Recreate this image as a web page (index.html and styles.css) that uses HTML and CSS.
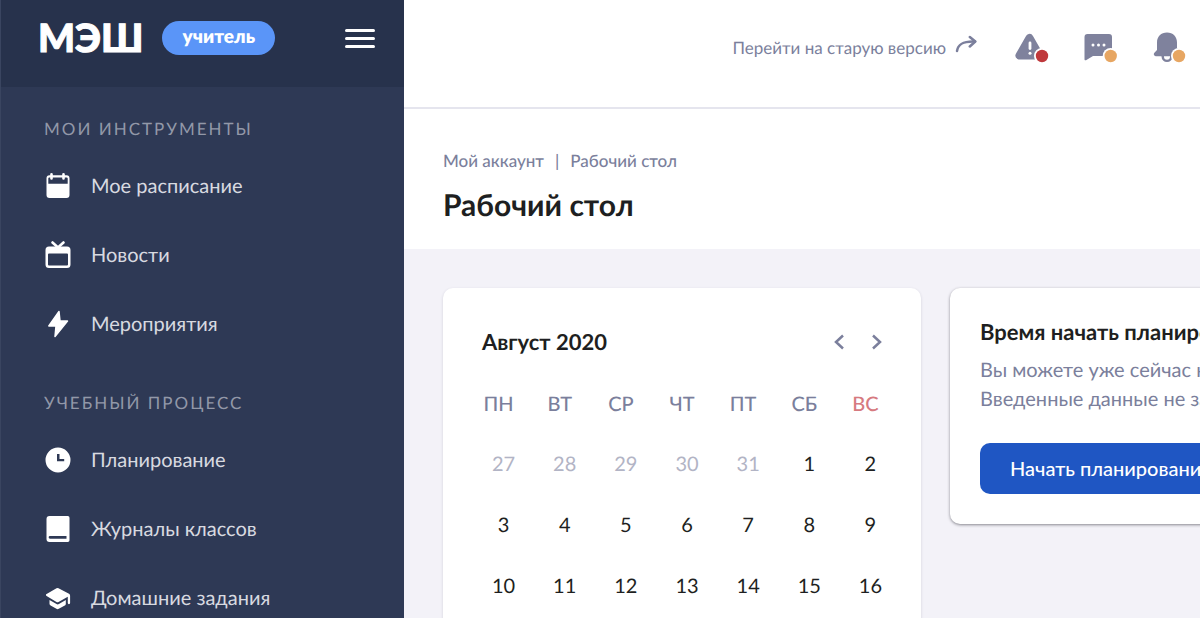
FILE: index.html
```html
<!DOCTYPE html>
<html lang="ru">
  <head>
    <meta charset="utf-8" />
    <meta name="viewport" content="width=device-width, initial-scale=1.0" />
    <title>Рабочий стол</title>
    <link rel="stylesheet" href="styles.css">
  </head>
  <body>
    <aside class="sidebar">
      <div class="sidebar-header">
        <a href="#" class="logo">МЭШ</a>
        <span class="role">учитель</span>
        <button type="button" class="menu-btn" aria-label="Меню">
          <span></span>
          <span></span>
          <span></span>
        </button>
      </div>
      <nav class="nav">
        <section class="nav-group">
          <h2>Мои инструменты</h2>
          <ul>
            <li>
              <a href="#">
                <svg viewBox="0 0 28 28" fill="currentColor">
                  <path fill-rule="evenodd" d="M7.500 1a1.300 1.300 0 0 1 1.300 1.300V3.200h9.400V2.300a1.300 1.300 0 0 1 2.600 0V3.200h1.700a3 3 0 0 1 3 3v16.800a3 3 0 0 1-3 3H5.500a3 3 0 0 1-3-3V6.200a3 3 0 0 1 3-3h.7V2.300A1.300 1.300 0 0 1 7.500 1zM4.300 6.500v5.200h19.400V6.500a1 1 0 0 0-1-1h-1.900v1a1.300 1.300 0 0 1-2.600 0v-1H8.800v1a1.300 1.300 0 0 1-2.600 0v-1h-.9a1 1 0 0 0-1 1z"/>
                </svg>
                Мое расписание
              </a>
            </li>
            <li>
              <a href="#">
                <svg viewBox="0 0 28 28">
                  <path d="M8.500 1.500l5.500 5 5.500-5" fill="none" stroke="currentColor" stroke-width="2.600" stroke-linecap="round"/>
                  <path fill="currentColor" fill-rule="evenodd" d="M5 5.500h18a3.500 3.500 0 0 1 3.500 3.500v14.500A3.500 3.500 0 0 1 23 27H5a3.500 3.500 0 0 1-3.500-3.500V9A3.500 3.500 0 0 1 5 5.500zM5 12.500a1 1 0 0 0-1 1v10a1 1 0 0 0 1 1h18a1 1 0 0 0 1-1v-10a1 1 0 0 0-1-1z"/>
                </svg>
                Новости
              </a>
            </li>
            <li>
              <a href="#">
                <svg viewBox="0 0 28 28">
                  <path d="M15 1.500L4.800 16H12l-1 10.500L23.500 11H16z" fill="currentColor" stroke="currentColor" stroke-width="1.500" stroke-linejoin="round"/>
                </svg>
                Мероприятия
              </a>
            </li>
          </ul>
        </section>
        <section class="nav-group">
          <h2>Учебный процесс</h2>
          <ul>
            <li>
              <a href="#">
                <svg viewBox="0 0 28 28" fill="currentColor">
                  <path fill-rule="evenodd" d="M14 1.500a12.500 12.500 0 1 1 0 25 12.500 12.500 0 0 1 0-25zM13 8v7.300h7.200v-2.300h-4.700V8z"/>
                </svg>
                Планирование
              </a>
            </li>
            <li>
              <a href="#">
                <svg viewBox="0 0 28 28" fill="currentColor">
                  <path fill-rule="evenodd" d="M5.500 1h18.300a1.700 1.700 0 0 1 1.700 1.700v22.600a1.700 1.700 0 0 1-1.700 1.700H5.500a3 3 0 0 1-3-3V4a3 3 0 0 1 3-3zM6 21a1.300 1.300 0 0 0 0 2.700h16.500V21z"/>
                </svg>
                Журналы классов
              </a>
            </li>
            <li>
              <a href="#">
                <svg viewBox="0 0 28 28" fill="currentColor">
                  <path d="M12.500 4.200a2 2 0 0 1 2 0l10.500 5.500q1.100.7 1.100 2V19a1.100 1.100 0 0 1-2.300 0v-6.200L14.500 18a2 2 0 0 1-2 0L2.600 12a1 1 0 0 1 0-1.900z"/>
                  <path d="M5.500 16l7 4.100q1.200.7 2.400 0l6.900-4.100v4a2 2 0 0 1-1 1.600l-6 3.200a2.500 2.500 0 0 1-2.400 0l-5.800-3.200a2 2 0 0 1-1.100-1.800z"/>
                </svg>
                Домашние задания
              </a>
            </li>
          </ul>
        </section>
      </nav>
    </aside>
    <div class="page">
      <header class="topbar">
        <a href="#" class="old-version">
          Перейти на старую версию
          <svg viewBox="0 0 22 20" fill="none" stroke="currentColor" stroke-width="2.500" stroke-linecap="round" stroke-linejoin="round">
            <path d="M2 17C3 10 8 7 20 7.500"/>
            <path d="M14.800 3l5.500 4.500-5.500 5"/>
          </svg>
        </a>
        <div class="notices">
          <button type="button" class="notice" aria-label="Предупреждения">
            <svg viewBox="0 0 34 32">
              <path d="M14.500 6L4.500 23.500h20z" fill="#7f829d" stroke="#7f829d" stroke-width="8" stroke-linejoin="round"/>
              <path d="M15 11v5.500" stroke="#fff" stroke-width="2.800" stroke-linecap="round"/>
              <circle cx="15" cy="21.300" r="1.500" fill="#fff"/>
              <circle cx="27" cy="24" r="8" fill="#fff"/>
              <circle cx="27" cy="24" r="6.200" fill="#bf383b"/>
            </svg>
          </button>
          <button type="button" class="notice" aria-label="Сообщения">
            <svg viewBox="0 0 34 32">
              <path d="M3.500 2h21.500a3 3 0 0 1 3 3v16a3 3 0 0 1-3 3H9l-7 4.200a1 1 0 0 1-1.500-1V5a3 3 0 0 1 3-3z" fill="#7f829d"/>
              <circle cx="9" cy="13" r="1.500" fill="#fff"/>
              <circle cx="14.500" cy="13" r="1.500" fill="#fff"/>
              <circle cx="20" cy="13" r="1.500" fill="#fff"/>
              <circle cx="26.700" cy="24" r="8" fill="#fff"/>
              <circle cx="26.700" cy="24" r="6.200" fill="#e7a662"/>
            </svg>
          </button>
          <button type="button" class="notice" aria-label="Уведомления">
            <svg viewBox="0 0 34 32">
              <path d="M14 .5c-6 0-10 4-10 10v7.500l-2.800 3a2 2 0 0 0 1.500 3.200h22.800V18L24 16v-5.500c0-6-4-10-10-10z" fill="#7f829d"/>
              <path d="M8.500 23.500h11v1a5.500 5.500 0 0 1-11 0z" fill="#7f829d"/>
              <path d="M11 24.200h6v.6a3 3 0 0 1-6 0z" fill="#fff"/>
              <circle cx="26" cy="24" r="8" fill="#fff"/>
              <circle cx="26" cy="24" r="6.200" fill="#e7a662"/>
            </svg>
          </button>
        </div>
      </header>
      <div class="page-title">
        <div class="breadcrumbs">
          <a href="#">Мой аккаунт</a>
          <span>|</span>
          <a href="#">Рабочий стол</a>
        </div>
        <h1>Рабочий стол</h1>
      </div>
      <main class="content">
        <section class="card calendar">
          <div class="calendar-header">
            <h2>Август 2020</h2>
            <div class="calendar-nav">
              <button type="button" aria-label="Предыдущий месяц">
                <svg viewBox="0 0 12 16"><path d="M10 1.500L3 8l7 6.500"/></svg>
              </button>
              <button type="button" aria-label="Следующий месяц">
                <svg viewBox="0 0 12 16"><path d="M2 1.500L9 8l-7 6.500"/></svg>
              </button>
            </div>
          </div>
          <table>
            <thead>
              <tr>
                <th>ПН</th>
                <th>ВТ</th>
                <th>СР</th>
                <th>ЧТ</th>
                <th>ПТ</th>
                <th>СБ</th>
                <th class="sunday">ВС</th>
              </tr>
            </thead>
            <tbody>
              <tr>
                <td class="other">27</td>
                <td class="other">28</td>
                <td class="other">29</td>
                <td class="other">30</td>
                <td class="other">31</td>
                <td>1</td>
                <td>2</td>
              </tr>
              <tr>
                <td>3</td>
                <td>4</td>
                <td>5</td>
                <td>6</td>
                <td>7</td>
                <td>8</td>
                <td>9</td>
              </tr>
              <tr>
                <td>10</td>
                <td>11</td>
                <td>12</td>
                <td>13</td>
                <td>14</td>
                <td>15</td>
                <td>16</td>
              </tr>
            </tbody>
          </table>
        </section>
        <section class="card planning">
          <h2>Время начать планирование</h2>
          <p>Вы можете уже сейчас начать<br>Введенные данные не затеряются</p>
          <button type="button" class="primary-btn">Начать планирование</button>
        </section>
      </main>
    </div>
  </body>
</html>
```
FILE: styles.css
```css
:root {
  --sidebar: #2e3955;
  --sidebar-dark: #27324c;
  --muted: #7b7f9c;
  --text: #1e1f21;
  --accent: #1f56c3;
}

* {
  box-sizing: border-box;
}

body {
  margin: 0;
  height: 100vh;
  display: flex;
  overflow: hidden;
  font-family: Lato, "Liberation Sans", sans-serif;
  font-size: 20px;
  line-height: 24px;
  text-rendering: geometricPrecision;
  color: var(--text);
  background: #f3f2f8;
}

h1,
h2,
p,
ul {
  margin: 0;
  padding: 0;
}

ul {
  list-style: none;
}

a {
  color: inherit;
  text-decoration: none;
}

button {
  border: none;
  background: none;
  padding: 0;
  font: inherit;
  color: inherit;
  cursor: pointer;
}

svg {
  display: block;
}

/* sidebar */
.sidebar {
  flex: 0 0 404px;
  background: var(--sidebar);
  border-left: 1px solid #3a4560;
  overflow: hidden;
}

.sidebar-header {
  display: flex;
  align-items: center;
  height: 87px;
  padding: 0 29px 11px 37px;
  background: var(--sidebar-dark);
}

.logo {
  font-size: 39px;
  line-height: 40px;
  font-weight: 900;
  color: #fff;
  -webkit-text-stroke: 1px #fff;
}

.role {
  margin-left: 19px;
  padding: 0 20px 2px;
  border-radius: 17px;
  background: #5a95f8;
  color: #fff;
  font-size: 19px;
  font-weight: 800;
  line-height: 32px;
}

.menu-btn {
  display: flex;
  flex-direction: column;
  gap: 5px;
  width: 30px;
  margin-left: auto;
}

.menu-btn span {
  height: 3px;
  border-radius: 2px;
  background: #fff;
}

.nav {
  display: flex;
  flex-direction: column;
  gap: 34px;
  padding: 31px 43px;
}

.nav-group h2 {
  margin-bottom: 11px;
  font-size: 17px;
  line-height: 22px;
  font-weight: 400;
  letter-spacing: 2px;
  text-transform: uppercase;
  color: #9298a8;
}

.nav-group a {
  display: flex;
  align-items: center;
  gap: 19px;
  height: 69px;
  color: #d8dae0;
  white-space: nowrap;
}

.nav-group svg {
  width: 28px;
  height: 28px;
  color: #fff;
}

/* top bar */
.page {
  flex: 1;
  min-width: 0;
  overflow: hidden;
}

.topbar {
  display: flex;
  align-items: center;
  justify-content: flex-end;
  gap: 38px;
  height: 109px;
  padding: 0 13px 12px 39px;
  background: #fff;
  border-bottom: 2px solid #e5e5ee;
}

.old-version {
  display: flex;
  align-items: center;
  gap: 9px;
  font-size: 17px;
  color: var(--muted);
}

.old-version svg {
  width: 22px;
  height: 20px;
  margin-bottom: 8px;
}

.notices {
  display: flex;
  gap: 35px;
}

.notice svg {
  width: 34px;
  height: 32px;
}

.page-title {
  padding: 40px 39px 24px;
  background: #fff;
}

.breadcrumbs {
  display: flex;
  gap: 11px;
  margin-bottom: 12px;
  font-size: 17px;
  font-weight: 500;
  color: var(--muted);
}

h1 {
  font-size: 30px;
  line-height: 40px;
  font-weight: 700;
}

/* cards */
.content {
  display: flex;
  align-items: flex-start;
  gap: 29px;
  padding: 39px;
}

.card {
  background: #fff;
  border-radius: 10px;
}

.card h2 {
  font-size: 22px;
  line-height: 28px;
  font-weight: 700;
}

.calendar {
  flex: 0 0 478px;
  padding: 40px 20px 39px 30px;
  box-shadow: 0 1px 3px rgba(40, 40, 70, 0.16);
}

.calendar-header {
  display: flex;
  align-items: center;
  justify-content: space-between;
  padding: 0 18px 0 9px;
}

.calendar-nav {
  display: flex;
  gap: 26px;
}

.calendar-nav svg {
  width: 12px;
  height: 16px;
  fill: none;
  stroke: var(--muted);
  stroke-width: 2.500;
}

table {
  width: 100%;
  margin-top: 19px;
  table-layout: fixed;
  border-collapse: collapse;
}

th,
td {
  height: 61px;
  padding: 0;
  text-align: center;
}

th {
  height: 58px;
  padding-right: 10px;
  font-weight: 500;
  color: var(--muted);
}

.sunday {
  color: #d67a80;
}

.other {
  color: #b2b4c5;
}

.planning {
  flex: 1 0 440px;
  padding: 30px;
  box-shadow: 0 1px 3px rgba(30, 30, 40, 0.5);
}

.planning p {
  margin: 10px 0 29px;
  line-height: 29px;
  color: var(--muted);
  white-space: nowrap;
}

.primary-btn {
  height: 51px;
  padding: 0 30px 2px;
  border-radius: 10px;
  background: var(--accent);
  color: #fff;
  font-weight: 500;
  white-space: nowrap;
}
```
